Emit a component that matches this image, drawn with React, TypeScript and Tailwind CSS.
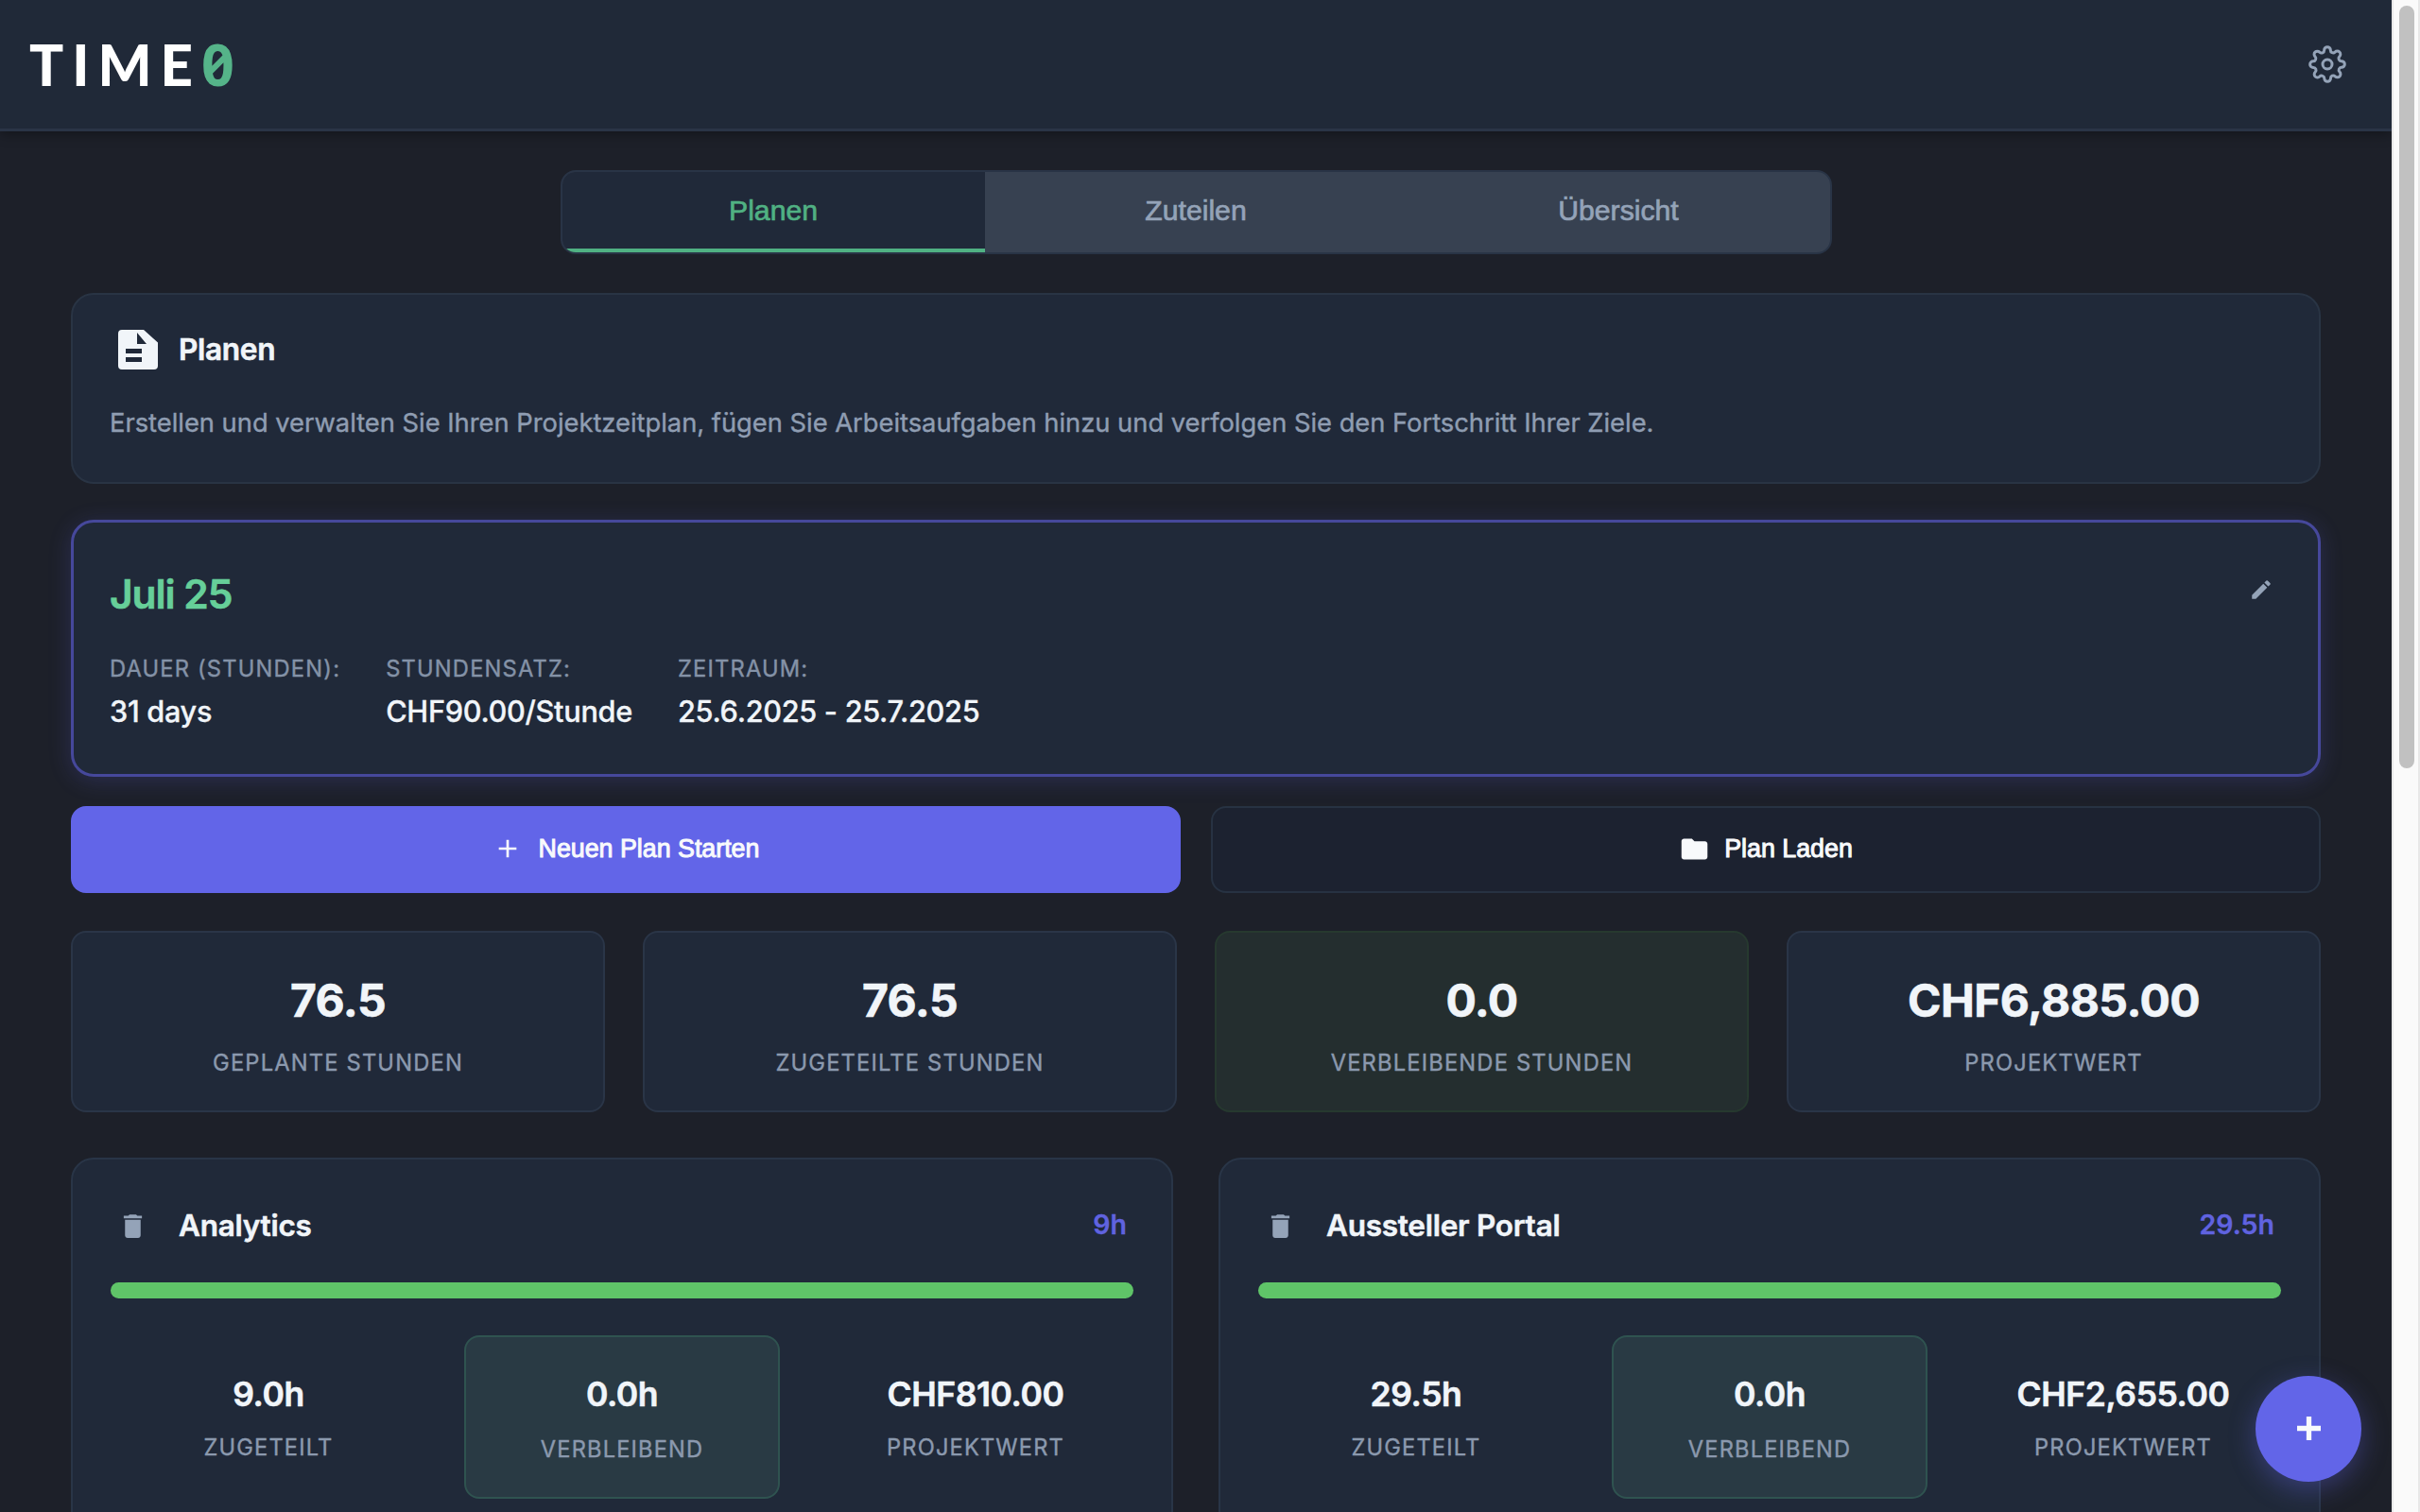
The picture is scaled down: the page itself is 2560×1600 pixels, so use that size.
import { MdAdd, MdDelete, MdEdit, MdFolder } from "react-icons/md";
import { FiSettings } from "react-icons/fi";
import clsx from "clsx";

const tabs = ["Planen", "Zuteilen", "Übersicht"];

const planDetails = [
  { label: "DAUER (STUNDEN):", value: "31 days" },
  { label: "STUNDENSATZ:", value: "CHF90.00/Stunde" },
  { label: "ZEITRAUM:", value: "25.6.2025 - 25.7.2025" },
];

const totals = [
  { value: "76.5", label: "GEPLANTE STUNDEN" },
  { value: "76.5", label: "ZUGETEILTE STUNDEN" },
  { value: "0.0", label: "VERBLEIBENDE STUNDEN", done: true },
  { value: "CHF6,885.00", label: "PROJEKTWERT" },
];

const projects = [
  { name: "Analytics", hours: "9h", assigned: "9.0h", remaining: "0.0h", worth: "CHF810.00" },
  { name: "Aussteller Portal", hours: "29.5h", assigned: "29.5h", remaining: "0.0h", worth: "CHF2,655.00" },
];

function Header() {
  return (
    <header className="relative z-10 flex h-[139px] shrink-0 items-center justify-between border-b-3 border-[#2a3446] bg-[#202938] pr-12 pl-[31px] shadow-[0_3px_12px_rgba(0,0,0,0.35)]">
      <div className="flex items-baseline text-[60px] leading-[64px] font-black">
        <span className="font-['Lato',sans-serif] tracking-[9px] text-white">TIME</span>
        <span className="font-['Noto_Sans',sans-serif] text-[61px] leading-[64px] font-bold text-[#55b489] [font-feature-settings:'zero']">0</span>
      </div>
      <FiSettings className="mb-px size-[40px] text-[#94a3b8] [stroke-width:1.8]" />
    </header>
  );
}

function Tabs() {
  return (
    <nav className="mx-auto mt-[41px] grid h-[89px] w-[1345px] shrink-0 grid-cols-3 overflow-hidden rounded-2xl border-2 border-[#293446] bg-[#374151]">
      {tabs.map((tab, i) => (
        <button
          key={tab}
          className={clsx(
            "font-['Liberation_Sans',sans-serif] text-[30.2px] leading-9 [-webkit-text-stroke:0.7px_currentColor]",
            i === 0 ? "border-b-4 border-[#50b183] bg-[#202939] text-[#50b183]" : "border-b-4 border-transparent text-[#94a3b8]",
          )}
        >
          {tab}
        </button>
      ))}
    </nav>
  );
}

function DocumentIcon() {
  return (
    <svg viewBox="0 0 42 42" className="size-[42px]" fill="currentColor" fillRule="evenodd">
      <path d="M4 0h23l15 13.5V38a4 4 0 0 1-4 4H4a4 4 0 0 1-4-4V4a4 4 0 0 1 4-4zM20 3v12h10zM8 20v5h17v-5zM8 29v5h17v-5z" />
    </svg>
  );
}

function Intro() {
  return (
    <section className="mt-[41px] h-[202px] shrink-0 rounded-3xl border-2 border-[#293444] bg-[#202939] px-[39px] pt-[32px]">
      <div className="flex h-[52px] items-center gap-[22px] pl-[9px] text-[#f1f5f9]">
        <DocumentIcon />
        <h2 className="text-[31.6px] leading-10 font-semibold tracking-[-0.01em] [-webkit-text-stroke:0.6px_currentColor]">Planen</h2>
      </div>
      <p className="mt-[31px] text-[27.3px] leading-[42px] text-[#8f9db2] [-webkit-text-stroke:0.4px_currentColor]">
        Erstellen und verwalten Sie Ihren Projektzeitplan, fügen Sie Arbeitsaufgaben hinzu und verfolgen Sie den Fortschritt Ihrer Ziele.
      </p>
    </section>
  );
}

function PlanCard() {
  return (
    <section className="mt-[38px] h-[272px] shrink-0 rounded-3xl border-3 border-[#46489b] bg-[#202939] px-[38px] pt-[49px] shadow-[0_4px_24px_rgba(99,102,241,0.2)]">
      <div className="flex h-[54px] items-center justify-between pr-[9px]">
        <h1 className="text-[42.5px] leading-[54px] font-semibold tracking-[-0.025em] text-[#66cf99] [-webkit-text-stroke:0.6px_currentColor]">Juli 25</h1>
        <MdEdit className="mb-[10px] size-[26px] text-[#94a3b8]" />
      </div>
      <dl className="mt-[37px] flex gap-12">
        {planDetails.map((d) => (
          <div key={d.label}>
            <dt className="text-[23.7px] leading-[30px] tracking-[0.05em] text-[#8492a7] [-webkit-text-stroke:0.4px_currentColor]">{d.label}</dt>
            <dd className="mt-[10px] text-[30.7px] leading-10 font-medium tracking-[-0.01em] text-[#f1f5f9] [-webkit-text-stroke:0.3px_currentColor]">{d.value}</dd>
          </div>
        ))}
      </dl>
    </section>
  );
}

function Actions() {
  return (
    <div className="mt-[31px] grid h-[92px] shrink-0 grid-cols-2 gap-8 font-['Liberation_Sans',sans-serif] text-[26.8px] leading-8 text-[#f8fafc]">
      <button className="flex items-center justify-center gap-[17px] rounded-2xl bg-[#6265e8] pb-0.5">
        <MdAdd className="size-[32px]" />
        <span className="[-webkit-text-stroke:1px_currentColor]">Neuen Plan Starten</span>
      </button>
      <button className="flex items-center justify-center gap-[15px] rounded-2xl border-2 border-[#273242] bg-[#1c2230] pb-0.5">
        <MdFolder className="size-[33px]" />
        <span className="[-webkit-text-stroke:1px_currentColor]">Plan Laden</span>
      </button>
    </div>
  );
}

function Totals() {
  return (
    <div className="mt-[40px] grid h-[192px] shrink-0 grid-cols-4 gap-10">
      {totals.map((t) => (
        <div
          key={t.label}
          className={clsx(
            "flex flex-col items-center rounded-2xl border-2 pt-[42px]",
            t.done ? "border-[#26392f] bg-[#242e2f]" : "border-[#2a3547] bg-[#202939]",
          )}
        >
          <div className="text-[48px] leading-[60px] font-bold tracking-[-0.012em] text-[#f1f5f9] [-webkit-text-stroke:0.6px_currentColor]">{t.value}</div>
          <div className="mt-[21px] text-[23.7px] leading-[30px] tracking-[0.05em] text-[#8b99ae] [-webkit-text-stroke:0.4px_currentColor]">{t.label}</div>
        </div>
      ))}
    </div>
  );
}

function Metric({ value, label, highlight }: { value: string; label: string; highlight?: boolean }) {
  return (
    <div
      className={clsx(
        "flex h-[173px] flex-col items-center rounded-2xl border-2 pt-[40px]",
        highlight ? "border-[#2f5350] bg-[#293a44]" : "border-transparent",
      )}
    >
      <div className="text-[35.5px] leading-[42px] font-semibold tracking-[-0.012em] text-[#f1f5f9] [-webkit-text-stroke:0.6px_currentColor]">{value}</div>
      <div className={clsx("text-[23.6px] leading-[30px] tracking-[0.05em] text-[#8b99ae] [-webkit-text-stroke:0.4px_currentColor]", highlight ? "mt-[22px]" : "mt-[20px]")}>{label}</div>
    </div>
  );
}

function Projects() {
  return (
    <div className="mt-[48px] grid shrink-0 grid-cols-2 gap-12">
      {projects.map((p) => (
        <section key={p.name} className="h-[440px] rounded-3xl border-2 border-[#293547] bg-[#202939] px-10 pt-[49px]">
          <div className="flex h-[42px] items-center pr-[7px] pl-[7px]">
            <MdDelete className="size-[33px] text-[#94a3b8]" />
            <h3 className="ml-[32px] text-[31.5px] leading-[42px] font-semibold tracking-[-0.008em] text-[#f1f5f9] [-webkit-text-stroke:0.5px_currentColor]">{p.name}</h3>
            <span className="mb-[3px] ml-auto text-[28.5px] leading-9 font-semibold text-[#6063e0] [-webkit-text-stroke:0.3px_currentColor]">{p.hours}</span>
          </div>
          <div className="mt-[39px] h-[17px] rounded-full bg-[#5fc468]" />
          <div className="mt-[39px] grid grid-cols-3 gap-10">
            <Metric value={p.assigned} label="ZUGETEILT" />
            <Metric value={p.remaining} label="VERBLEIBEND" highlight />
            <Metric value={p.worth} label="PROJEKTWERT" />
          </div>
        </section>
      ))}
    </div>
  );
}

export default function App() {
  return (
    <div className="flex h-[1600px] w-[2560px] overflow-hidden bg-[#1d2029] font-['Inter',sans-serif]">
      <div className="relative flex w-[2530px] flex-col overflow-hidden">
        <Header />
        <main className="flex min-h-0 flex-1 flex-col px-[75px]">
          <Tabs />
          <Intro />
          <PlanCard />
          <Actions />
          <Totals />
          <Projects />
        </main>
        <button
          aria-label="Hinzufügen"
          className="absolute right-8 bottom-8 flex size-[112px] items-center justify-center rounded-full bg-[#6265e8] shadow-[0_8px_28px_rgba(99,102,241,0.35)]"
        >
          <svg viewBox="0 0 26 26" className="mb-0.5 size-[25px]" fill="none" stroke="#f8fafc" strokeWidth="5.5">
            <path d="M13 0v26M0 13h26" />
          </svg>
        </button>
      </div>
      <div className="flex w-[30px] justify-center border-x-2 border-[#e8e8e8] bg-[#fafafa] pt-[6px]">
        <div className="h-[807px] w-4 translate-x-px rounded-full bg-[#c1c1c1]" />
      </div>
    </div>
  );
}
